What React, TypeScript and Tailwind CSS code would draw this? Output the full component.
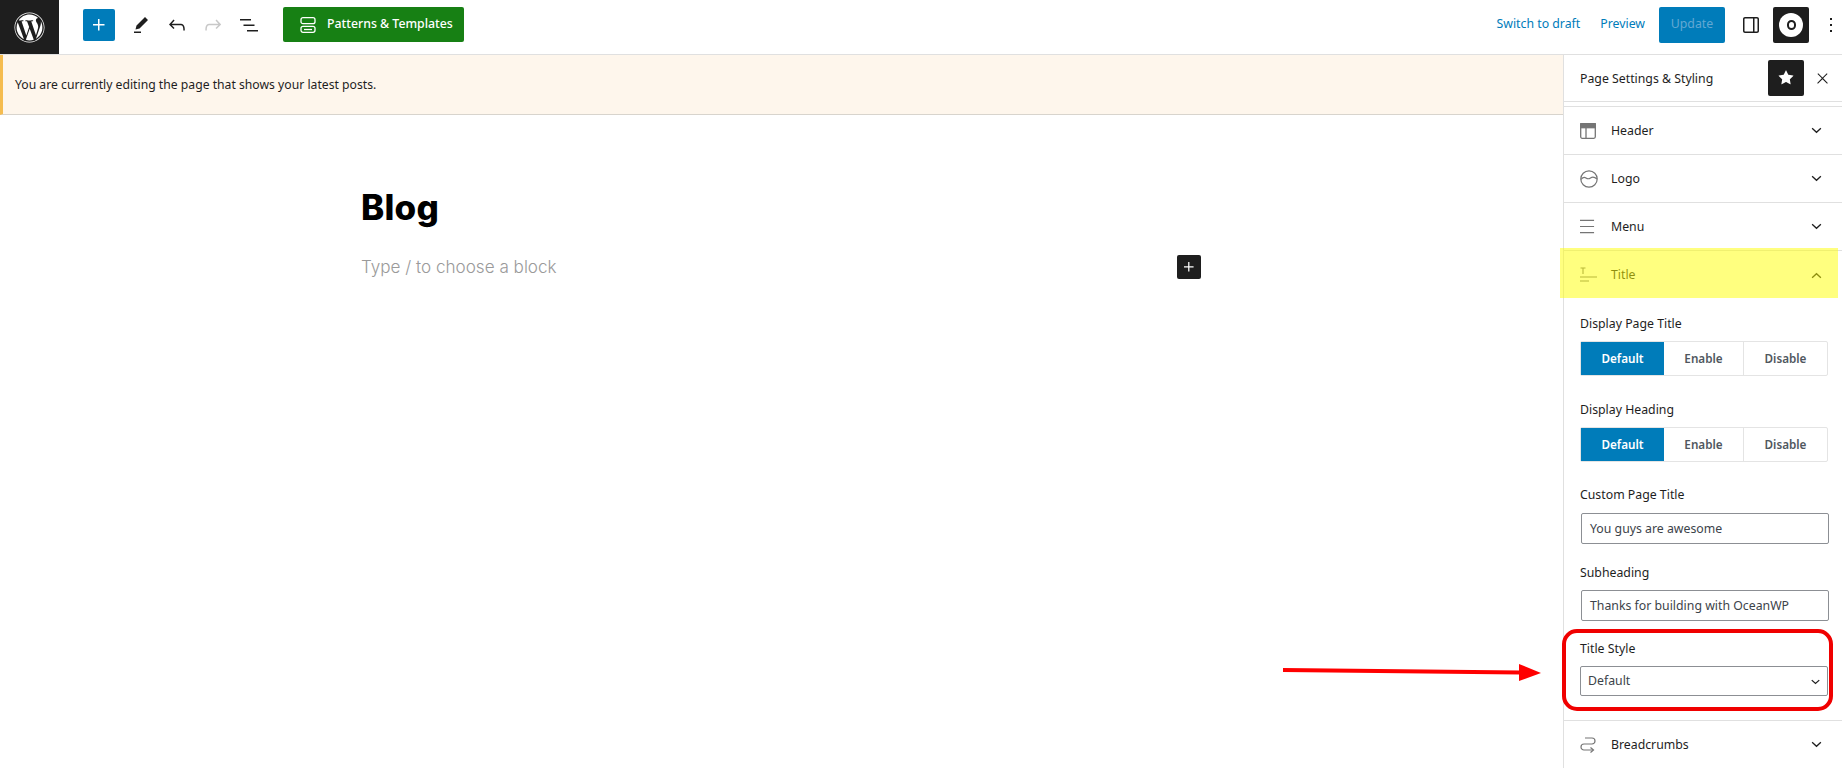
import React from "react";
import { FaWordpress } from "react-icons/fa";

const Ico = ({ d, className = "", size = 24 }: { d: string; className?: string; size?: number }) => (
  <svg viewBox="0 0 24 24" width={size} height={size} fill="currentColor" className={className}>
    <path d={d} />
  </svg>
);

const Chevron = ({ up = false }: { up?: boolean }) => (
  <svg viewBox="0 0 12 8" width="11" height="7" fill="none" stroke="#1e1e1e" strokeWidth="1.5" className={up ? "rotate-180" : ""}>
    <path d="M1 1.500 6 6l5-4.500" />
  </svg>
);

const grey = "#757575";

const HeaderIcon = () => (
  <svg viewBox="0 0 16 16" width="16" height="16" fill="none" stroke={grey} strokeWidth="1.3">
    <rect x="0.7" y="0.7" width="14.6" height="14.6" rx="1.5" />
    <rect x="0.7" y="0.7" width="14.6" height="4" fill={grey} />
    <path d="M6 5v10" />
  </svg>
);
const LogoIcon = () => (
  <svg viewBox="0 0 18 18" width="18" height="18" fill="none" stroke={grey} strokeWidth="1.2">
    <circle cx="9" cy="9" r="8.2" />
    <path d="M1 9.500c2-2.500 3.500-2.500 5-1.500s3 1 4.500 0 3.500-1.500 6.500 1" />
  </svg>
);
const MenuIcon = () => (
  <svg viewBox="0 0 16 16" width="15" height="15" fill="none" stroke={grey} strokeWidth="1.2">
    <path d="M0 1.500h15M0 8h15M0 14.500h15" />
  </svg>
);
const TitleIcon = () => (
  <svg viewBox="0 0 17 16" width="17" height="16" fill="none" stroke={grey} strokeWidth="1.1">
    <path d="M0.500 1h5M3 1v6M0 10h17M0 14h9" />
  </svg>
);
const CrumbIcon = () => (
  <svg viewBox="0 0 16 16" width="16" height="16" fill="none" stroke={grey} strokeWidth="1.2">
    <path d="M5 1h7a2.500 2.500 0 0 1 0 6H4a2.800 2.800 0 0 0 0 6h9" />
    <path d="M10.500 10.500 13.500 13l-3 2.500" />
  </svg>
);

const Row = ({ icon, label }: { icon: React.ReactNode; label: string }) => (
  <div className="h-12 flex items-center border-b border-[#e0e0e0] pl-[16px] pr-[20px] shrink-0">
    <span className="w-[31px] flex items-center">{icon}</span>
    <span className="flex-1 text-[12.3px] text-[#1e1e1e] pt-px">{label}</span>
    <Chevron />
  </div>
);

const Segmented = () => (
  <div className="flex h-[35px] w-[248px] border border-[#e4e4e4] rounded-[2px] text-[11.7px] font-semibold text-[#50575e]">
    <div className="w-[83px] bg-[#007cba] text-white flex items-center justify-center">Default</div>
    <div className="w-[80px] flex items-center justify-center border-r border-[#e4e4e4]">Enable</div>
    <div className="flex-1 flex items-center justify-center">Disable</div>
  </div>
);

const Label = ({ children }: { children: React.ReactNode }) => (
  <div className="text-[12.3px] leading-[18px] text-[#1e1e1e]">{children}</div>
);

const TextBox = ({ value }: { value: string }) => (
  <div className="ml-px w-[248px] h-[31px] border border-[#8c8f94] rounded-[2px] flex items-center pl-2 pt-px text-[12.3px] text-[#3c434a]">{value}</div>
);

export default function App() {
  return (
    <div className="relative w-[1842px] h-[768px] overflow-hidden bg-white flex flex-col font-['Noto_Sans','Open_Sans',sans-serif]">
      {/* top bar */}
      <header className="h-[55px] shrink-0 border-b border-[#e0e0e0] flex items-center pb-[5px]">
        <div className="w-[59px] h-[54px] -mb-[5px] self-start bg-[#1e1e1e] flex items-center justify-center text-white">
          <FaWordpress size={31} />
        </div>
        <div className="w-8 h-8 ml-6 bg-[#007cba] rounded-[2px] flex items-center justify-center text-white">
          <Ico d="M11 12.500V17.500H12.500V12.500H17.500V11H12.500V6H11V11H6V12.500H11Z" />
        </div>
        <div className="ml-[14px] w-6 text-[#1e1e1e]"><Ico d="m19 7-3-3-8.500 8.500-1 4 4-1L19 7Zm-7 11.500H5V20h7v-1.500Z" /></div>
        <div className="ml-3 w-6 text-[#1e1e1e]"><Ico d="M18.300 11.700c-.6-.6-1.400-.9-2.300-.9H6.700l2.900-3.300-1.100-1-4.500 5L8.500 16l1-1-2.700-2.700H16c.5 0 .9.2 1.300.5 1 1 1 3.400 1 4.500v.3h1.500v-.2c0-1.500 0-4.300-1.500-5.700z" /></div>
        <div className="ml-3 w-6 text-[#c8c8c8]"><Ico d="M15.600 6.500l-1.100 1 2.900 3.300H8c-.9 0-1.700.3-2.300.9-1.400 1.500-1.400 4.200-1.400 5.600v.2h1.500v-.3c0-1.100 0-3.500 1-4.500.3-.3.7-.5 1.300-.5h9.200L14.500 15l1.100 1.100 4.600-4.600-4.600-5z" /></div>
        <div className="ml-3 w-6 text-[#1e1e1e]"><Ico d="M3 6h11v1.500H3V6Zm3.500 5.500h11V13h-11v-1.500ZM21 17H10v1.500h11V17Z" /></div>
        <div className="ml-[22px] w-[181px] h-[35px] bg-[#178014] rounded-[2px] flex items-center text-white text-[12.3px] font-medium">
          <svg viewBox="0 0 16 16" width="16" height="16" fill="none" stroke="#fff" strokeWidth="1.300" className="ml-[17px]">
            <rect x="1" y="0.700" width="14" height="6" rx="2" />
            <rect x="1" y="9.300" width="14" height="6" rx="2" />
            <path d="M4 12.500h8" />
          </svg>
          <span className="ml-[11px] whitespace-nowrap">Patterns &amp; Templates</span>
        </div>
        <div className="flex-1" />
        <span className="text-[12.3px] text-[#007cba] whitespace-nowrap">Switch to draft</span>
        <span className="ml-5 text-[12.3px] text-[#007cba]">Preview</span>
        <div className="ml-[14px] w-[66px] h-9 bg-[#007cba] rounded-[2px] flex items-center justify-center text-[12.3px] text-[#62a8d3]">Update</div>
        <div className="ml-[14px] w-6 text-[#1e1e1e] -mr-1"><Ico d="M18 4H6c-1.100 0-2 .9-2 2v12c0 1.100.9 2 2 2h12c1.100 0 2-.9 2-2V6c0-1.100-.9-2-2-2zm-4 14.500H6c-.3 0-.5-.2-.5-.5V6c0-.3.2-.5.5-.5h8v13zm4.500-.5c0 .3-.2.5-.5.5h-2.500v-13H18c.3 0 .5.2.5.5v12z" /></div>
        <div className="ml-[14px] w-9 h-9 bg-[#1e1e1e] rounded-[2px] flex items-center justify-center">
          <span className="w-6 h-6 rounded-full bg-white flex items-center justify-center">
            <span className="w-[9px] h-[10px] rounded-full border-[2.5px] border-[#1e1e1e]" />
          </span>
        </div>
        <div className="ml-[10px] mr-[-1px] w-6 text-[#1e1e1e]"><Ico d="M13 19h-2v-2h2v2zm0-6h-2v-2h2v2zm0-6h-2V5h2v2z" /></div>
      </header>

      <div className="flex flex-1 min-h-0">
        {/* editor */}
        <main className="w-[1563px] shrink-0 flex flex-col">
          <div className="h-[60px] shrink-0 bg-[#fef6ec] border-l-[3px] border-l-[#f5bc4f] border-b border-b-[#d8d4cd] flex items-center pl-3 pt-[2px] text-[12.2px] text-[#1e1e1e]">
            You are currently editing the page that shows your latest posts.
          </div>
          <div className="pl-[361px]">
            <h1 className="mt-[69px] h-[46px] flex items-center text-[35px] font-extrabold text-black font-['Inter',sans-serif] tracking-[0.2px]">Blog</h1>
            <div className="mt-[24px] w-[840px] flex items-center justify-between">
              <span className="text-[17.1px] font-light font-['Inter',sans-serif] text-[#9a9a9a]">Type / to choose a block</span>
              <span className="w-6 h-6 bg-[#1e1e1e] rounded-[2px] flex items-center justify-center text-white">
                <Ico size={20} d="M11 12.500V17.500H12.500V12.500H17.500V11H12.500V6H11V11H6V12.500H11Z" />
              </span>
            </div>
          </div>
        </main>

        {/* sidebar */}
        <aside className="flex-1 min-w-0 border-l border-[#e0e0e0] flex flex-col">
          <div className="h-[47px] shrink-0 border-b border-[#e0e0e0] flex items-center pl-4">
            <span className="flex-1 text-[12.3px] text-[#1e1e1e] whitespace-nowrap pt-[2px]">Page Settings &amp; Styling</span>
            <span className="w-9 h-9 bg-[#1e1e1e] rounded-[2px] flex items-center justify-center text-white">
              <Ico d="M11.776 4.454a.25.25 0 01.448 0l2.069 4.192a.25.25 0 00.188.137l4.626.672a.25.25 0 01.139.426l-3.348 3.263a.25.25 0 00-.072.222l.79 4.607a.25.25 0 01-.362.263l-4.138-2.175a.25.25 0 00-.232 0l-4.138 2.175a.25.25 0 01-.363-.263l.79-4.607a.25.25 0 00-.071-.222L4.754 9.881a.25.25 0 01.139-.426l4.626-.672a.25.25 0 00.188-.137l2.069-4.192z" />
            </span>
            <span className="ml-[6px] mr-[8px] w-6 h-6 flex items-center justify-center text-[#1e1e1e]">
              <Ico size={17} d="M13 11.800l6.100-6.300-1-1-6.100 6.200-6.100-6.200-1 1 6.100 6.300-6.500 6.700 1 1 6.500-6.600 6.500 6.600 1-1z" />
            </span>
          </div>
          <div className="h-[5px] shrink-0 border-b border-[#e0e0e0]" />
          <Row icon={<HeaderIcon />} label="Header" />
          <Row icon={<LogoIcon />} label="Logo" />
          <Row icon={<MenuIcon />} label="Menu" />
          <div className="h-12 flex items-center pl-[16px] pr-[20px] shrink-0">
            <span className="w-[31px] flex items-center"><TitleIcon /></span>
            <span className="flex-1 text-[12.3px] text-[#1e1e1e] pt-px">Title</span>
            <Chevron up />
          </div>

          <div className="pl-4 pr-[14px] pt-[16px] pb-[24px] border-b border-[#e0e0e0] shrink-0">
            <Label>Display Page Title</Label>
            <div className="mt-2"><Segmented /></div>
            <div className="mt-[25px]"><Label>Display Heading</Label></div>
            <div className="mt-2"><Segmented /></div>
            <div className="mt-[24px]"><Label>Custom Page Title</Label></div>
            <div className="mt-[9px]"><TextBox value="You guys are awesome" /></div>
            <div className="mt-[20px]"><Label>Subheading</Label></div>
            <div className="mt-2"><TextBox value="Thanks for building with OceanWP" /></div>
            <div className="relative mt-[19px]">
              <Label>Title Style</Label>
              <div className="mt-2 w-[248px] h-[30px] border border-[#8c8f94] rounded-[2px] flex items-center justify-between pl-[7px] pr-[7px] pt-px text-[12.3px] text-[#3c434a]">
                Default
                <svg viewBox="0 0 12 8" width="9" height="6" fill="none" stroke="#1e1e1e" strokeWidth="1.700"><path d="M1 1.500 6 6l5-4.500" /></svg>
              </div>
              {/* red annotation */}
              <div className="absolute -left-[18px] -top-[11px] w-[271px] h-[82px] border-[4px] border-[#f00000] rounded-[15px]" />
            </div>
          </div>
          <Row icon={<CrumbIcon />} label="Breadcrumbs" />
        </aside>
      </div>

      {/* yellow highlight annotation */}
      <div className="absolute left-[1560px] top-[248px] w-[278px] h-[50px] bg-[#ffff00]/50" />

      {/* arrow annotation */}
      <svg className="absolute left-[1283px] top-[660px]" width="260" height="24" viewBox="0 0 260 24" fill="#ff0000">
        <path d="M0 8 L237 10.500 L237 14.500 L0 12 Z" />
        <path d="M236 4 L236 21 L258 13 Z" />
      </svg>
    </div>
  );
}
